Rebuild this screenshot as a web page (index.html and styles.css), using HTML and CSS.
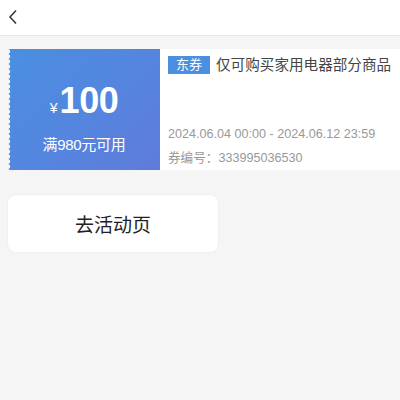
FILE: index.html
```html
<!DOCTYPE html>
<html lang="zh">
<head>
<meta charset="utf-8">
<link rel="stylesheet" href="styles.css">
</head>
<body>
<header class="nav">
  <svg class="back" width="10" height="16" viewBox="0 0 10 16"><path d="M8 1.5 L2 8 L8 14.5" fill="none" stroke="#333" stroke-width="1.5"/></svg>
</header>
<main class="page">
  <section class="coupon">
    <div class="coupon-left">
      <div class="amount"><span class="yen">¥</span><span class="num">100</span></div>
      <div class="cond">满980元可用</div>
    </div>
    <div class="coupon-right">
      <div class="title"><span class="tag">东券</span><span class="desc">仅可购买家用电器部分商品</span></div>
      <div class="meta">
        <div class="date">2024.06.04 00:00 - 2024.06.12 23:59</div>
        <div class="code">券编号：333995036530</div>
      </div>
    </div>
  </section>
  <button class="go">去活动页</button>
</main>
</body>
</html>
```

FILE: styles.css
```css
* { box-sizing: border-box; }
html, body { margin: 0; padding: 0; }
body {
  background: #f5f5f5;
  font-family: "Liberation Sans", "Noto Sans CJK SC", sans-serif;
  width: 400px;
  height: 400px;
  overflow: hidden;
}
.nav {
  height: 36px;
  background: #fff;
  border-bottom: 1px solid #e8e8e8;
  display: flex;
  align-items: center;
  padding-left: 8px;
}
.back { display: block; margin-top: -1px; }
.page {
  padding: 13px 0 0 8px;
  display: flex;
  flex-direction: column;
  align-items: flex-start;
}
.coupon {
  display: flex;
  width: 392px;
  height: 121px;
  background: #fff;
}
.coupon-left {
  position: relative;
  width: 152px;
  background: linear-gradient(135deg, #4a8fe0 0%, #5585df 55%, #5f7bd9 100%);
  color: #fff;
  display: flex;
  flex-direction: column;
  align-items: center;
  padding-top: 34px;
}
.coupon-left::before {
  content: "";
  position: absolute;
  left: 0;
  top: 0;
  bottom: 0;
  width: 3px;
  background: radial-gradient(circle at 0 50%, #f5f5f5 2px, transparent 2.6px) 0 0 / 4px 5px repeat-y;
}
.amount { display: flex; align-items: baseline; line-height: 1; }
.yen { font-size: 14px; margin-right: 2px; }
.num { font-size: 36px; font-weight: bold; letter-spacing: -0.5px; }
.cond { font-size: 15px; margin-top: 14px; letter-spacing: -0.3px; }
.coupon-right {
  flex: 1;
  padding: 7px 0 0 8px;
  display: flex;
  flex-direction: column;
  justify-content: space-between;
}
.title { display: flex; align-items: center; line-height: 18px; }
.tag {
  background: #4a8fe0;
  color: #fff;
  font-size: 13px;
  width: 42px;
  height: 18px;
  text-align: center;
  margin-right: 6px;
}
.desc { color: #444; font-size: 14.6px; }
.meta { color: #999; font-size: 12.6px; line-height: 24px; padding-bottom: 0; }
.go {
  margin-top: 25px;
  width: 210px;
  height: 57px;
  background: #fff;
  border: none;
  border-radius: 8px;
  box-shadow: 0 0 2px rgba(0,0,0,0.08);
  font-family: inherit;
  font-size: 19px;
  color: #222;
  padding: 0;
}
```
